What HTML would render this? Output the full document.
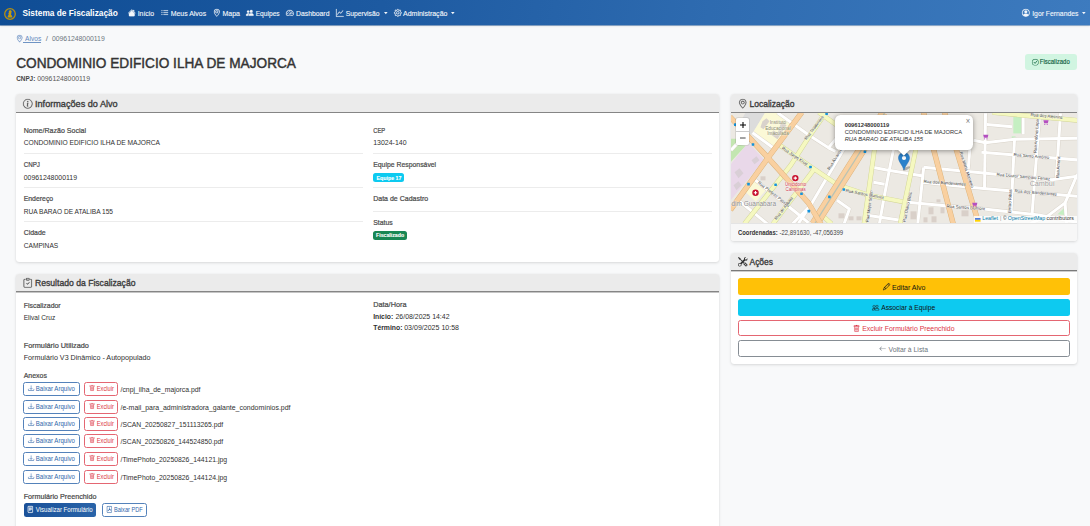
<!DOCTYPE html>
<html><head><meta charset="utf-8"><title>Sistema de Fiscalização</title>
<style>
html,body{margin:0;padding:0}
body{width:1090px;height:526px;overflow:hidden;position:relative;background:#f8f9fa;font-family:"Liberation Sans",sans-serif}
.t{position:absolute;white-space:nowrap;transform-origin:0 0;display:block}
.i{position:absolute;display:block;overflow:visible}
.b{position:absolute;box-sizing:border-box}
.card{position:absolute;box-sizing:border-box;background:#fff;border-radius:3px;box-shadow:0 1px 3px rgba(0,0,0,.13),0 0 1px rgba(0,0,0,.08)}
.ch{position:absolute;box-sizing:border-box;background:#ebebeb;border-radius:3px 3px 0 0;border-bottom:1px solid #858585}
.sep{position:absolute;height:1px;background:#ececec}
</style></head><body>
<div class="b" style="left:0.00px;top:0.00px;width:1090.00px;height:26.00px;background:linear-gradient(100deg,#0f4d95 0%,#1d5aa1 35%,#2e6bb0 65%,#3d7bbf 100%);opacity:.5"></div>
<div class="b" style="left:0.00px;top:0.00px;width:1090.00px;height:25.00px;background:linear-gradient(100deg,#0f4d95 0%,#1d5aa1 35%,#2e6bb0 65%,#3d7bbf 100%);box-shadow:0 1px 2px rgba(0,0,0,.12)"></div>
<svg class="i" style="left:4.15px;top:7.7px;width:12px;height:12px" viewBox="0 0 24 24"><circle cx="12" cy="12" r="10.6" fill="#0f50ab" stroke="#b5900f" stroke-width="2.6"/><path d="M12.600 4.600c1.700 0 2.800 1.300 2.800 2.900 0 .900-.300 1.600-.900 2.200.300 1.300.100 2.500-.500 3.600 1.300.800 2.300 2.200 2.600 4.300.100.800-.200 1.300-.900 1.600H8.200c-.700-.300-1-.800-.900-1.600.300-1.900 1.100-3.200 2.300-4-.600-.700-1-1.500-.900-2.400.100-.900.600-1.400 1.200-1.800-.300-.600-.400-1.200-.300-1.900.200-1.700 1.400-2.900 3-2.900z" fill="#c49c0c"/></svg>
<span class="t" style="left:22px;top:3.00px;font-size:9.4px;line-height:20px;color:#fff;transform:translateX(0.50px) scaleX(0.8873);font-weight:bold;">Sistema de Fiscalização</span>
<svg class="i" style="left:128.36px;top:9.32px;width:7.63px;height:7.63px" viewBox="0 0 16 16" fill="#f4f7fb" stroke="#f4f7fb" stroke-width="0.5"><path d="M8.707 1.5a1 1 0 0 0-1.414 0L.646 8.146a.5.5 0 0 0 .708.708L8 2.207l6.646 6.647a.5.5 0 0 0 .708-.708L13 5.793V2.5a.5.5 0 0 0-.5-.5h-1a.5.5 0 0 0-.5.5v1.293z"/><path d="m8 3.293 6 6V13.5a1.5 1.5 0 0 1-1.5 1.5h-9A1.5 1.5 0 0 1 2 13.5V9.293z"/></svg>
<span class="t" style="left:137px;top:4.00px;font-size:7.7px;line-height:20px;color:#f4f7fb;transform:translateX(0.70px) scaleX(0.8966);-webkit-text-stroke:0.12px #f4f7fb;">Início</span>
<svg class="i" style="left:161.12px;top:9.32px;width:7.63px;height:7.63px" viewBox="0 0 16 16" fill="#f4f7fb" stroke="#f4f7fb" stroke-width="0.5"><path fill-rule="evenodd" d="M5 11.5a.5.5 0 0 1 .5-.5h9a.5.5 0 0 1 0 1h-9a.5.5 0 0 1-.5-.5m0-4a.5.5 0 0 1 .5-.5h9a.5.5 0 0 1 0 1h-9a.5.5 0 0 1-.5-.5m0-4a.5.5 0 0 1 .5-.5h9a.5.5 0 0 1 0 1h-9a.5.5 0 0 1-.5-.5m-3 1a1 1 0 1 0 0-2 1 1 0 0 0 0 2m0 4a1 1 0 1 0 0-2 1 1 0 0 0 0 2m0 4a1 1 0 1 0 0-2 1 1 0 0 0 0 2"/></svg>
<span class="t" style="left:170px;top:4.00px;font-size:7.7px;line-height:20px;color:#f4f7fb;transform:translateX(0.70px) scaleX(0.9017);-webkit-text-stroke:0.12px #f4f7fb;">Meus Alvos</span>
<svg class="i" style="left:212.65px;top:9.32px;width:7.63px;height:7.63px" viewBox="0 0 16 16" fill="#f4f7fb" stroke="#f4f7fb" stroke-width="0.5"><path d="M12.166 8.94c-.524 1.062-1.234 2.12-1.96 3.07A32 32 0 0 1 8 14.58a32 32 0 0 1-2.206-2.57c-.726-.95-1.436-2.008-1.96-3.07C3.304 7.867 3 6.862 3 6a5 5 0 0 1 10 0c0 .862-.305 1.867-.834 2.94M8 16s6-5.686 6-10A6 6 0 0 0 2 6c0 4.314 6 10 6 10"/><path d="M8 8a2 2 0 1 1 0-4 2 2 0 0 1 0 4m0 1a3 3 0 1 0 0-6 3 3 0 0 0 0 6"/></svg>
<span class="t" style="left:222px;top:4.00px;font-size:7.7px;line-height:20px;color:#f4f7fb;transform:translateX(0.50px) scaleX(0.9084);-webkit-text-stroke:0.12px #f4f7fb;">Mapa</span>
<svg class="i" style="left:246.10px;top:9.32px;width:7.63px;height:7.63px" viewBox="0 0 16 16" fill="#f4f7fb" stroke="#f4f7fb" stroke-width="0.5"><path d="M7 14s-1 0-1-1 1-4 5-4 5 3 5 4-1 1-1 1zm4-6a3 3 0 1 0 0-6 3 3 0 0 0 0 6m-5.784 6A2.24 2.24 0 0 1 5 13c0-1.355.68-2.75 1.936-3.72A6.3 6.3 0 0 0 5 9c-4 0-5 3-5 4s1 1 1 1zM4.5 8a2.5 2.5 0 1 0 0-5 2.5 2.5 0 0 0 0 5"/></svg>
<span class="t" style="left:255px;top:4.00px;font-size:7.7px;line-height:20px;color:#f4f7fb;transform:translateX(0.70px) scaleX(0.8624);-webkit-text-stroke:0.12px #f4f7fb;">Equipes</span>
<svg class="i" style="left:286.10px;top:9.32px;width:7.63px;height:7.63px" viewBox="0 0 16 16" fill="#f4f7fb" stroke="#f4f7fb" stroke-width="0.5"><path d="M8 4a.5.5 0 0 1 .5.5V6a.5.5 0 0 1-1 0V4.5A.5.5 0 0 1 8 4M3.732 5.732a.5.5 0 0 1 .707 0l.915.914a.5.5 0 1 1-.708.708l-.914-.915a.5.5 0 0 1 0-.707M2 10a.5.5 0 0 1 .5-.5h1.586a.5.5 0 0 1 0 1H2.5A.5.5 0 0 1 2 10m9.5 0a.5.5 0 0 1 .5-.5h1.5a.5.5 0 0 1 0 1H12a.5.5 0 0 1-.5-.5m.754-4.246a.39.39 0 0 0-.527-.02L7.547 9.31a.91.91 0 1 0 1.302 1.258l3.434-4.297a.39.39 0 0 0-.029-.518z"/><path fill-rule="evenodd" d="M0 10a8 8 0 1 1 15.547 2.661c-.442 1.253-1.845 1.602-2.932 1.25C11.309 13.488 9.475 13 8 13c-1.474 0-3.31.488-4.615.911-1.087.352-2.49.003-2.932-1.25A8 8 0 0 1 0 10m8-7a7 7 0 0 0-6.603 9.329c.203.575.923.876 1.68.63C4.397 12.533 6.358 12 8 12s3.604.532 4.923.96c.757.245 1.477-.056 1.68-.631A7 7 0 0 0 8 3"/></svg>
<span class="t" style="left:296px;top:4.00px;font-size:7.7px;line-height:20px;color:#f4f7fb;transform:translateX(0.00px) scaleX(0.8893);-webkit-text-stroke:0.12px #f4f7fb;">Dashboard</span>
<svg class="i" style="left:336.10px;top:9.32px;width:7.63px;height:7.63px" viewBox="0 0 16 16" fill="#f4f7fb" stroke="#f4f7fb" stroke-width="0.5"><path fill-rule="evenodd" d="M0 0h1v15h15v1H0zm14.817 3.113a.5.5 0 0 1 .07.704l-4.5 5.5a.5.5 0 0 1-.74.037L7.06 6.767l-3.656 5.027a.5.5 0 0 1-.808-.588l4-5.5a.5.5 0 0 1 .758-.06l2.609 2.61 4.15-5.073a.5.5 0 0 1 .704-.07"/></svg>
<span class="t" style="left:345px;top:4.00px;font-size:7.7px;line-height:20px;color:#f4f7fb;transform:translateX(0.70px) scaleX(0.8774);-webkit-text-stroke:0.12px #f4f7fb;">Supervisão</span>
<svg class="i" style="left:393.60px;top:9.32px;width:7.63px;height:7.63px" viewBox="0 0 16 16" fill="#f4f7fb" stroke="#f4f7fb" stroke-width="0.5"><path d="M8 4.754a3.246 3.246 0 1 0 0 6.492 3.246 3.246 0 0 0 0-6.492M5.754 8a2.246 2.246 0 1 1 4.492 0 2.246 2.246 0 0 1-4.492 0"/><path d="M9.796 1.343c-.527-1.79-3.065-1.79-3.592 0l-.094.319a.873.873 0 0 1-1.255.52l-.292-.16c-1.64-.892-3.433.902-2.54 2.541l.159.292a.873.873 0 0 1-.52 1.255l-.319.094c-1.79.527-1.79 3.065 0 3.592l.319.094a.873.873 0 0 1 .52 1.255l-.16.292c-.892 1.64.901 3.434 2.541 2.54l.292-.159a.873.873 0 0 1 1.255.52l.094.319c.527 1.79 3.065 1.79 3.592 0l.094-.319a.873.873 0 0 1 1.255-.52l.292.16c1.64.893 3.434-.902 2.54-2.541l-.159-.292a.873.873 0 0 1 .52-1.255l.319-.094c1.79-.527 1.79-3.065 0-3.592l-.319-.094a.873.873 0 0 1-.52-1.255l.16-.292c.893-1.64-.902-3.433-2.541-2.54l-.292.159a.873.873 0 0 1-1.255-.52zm-2.633.283c.246-.835 1.428-.835 1.674 0l.094.319a1.873 1.873 0 0 0 2.693 1.115l.291-.16c.764-.415 1.6.42 1.184 1.185l-.159.292a1.873 1.873 0 0 0 1.116 2.692l.318.094c.835.246.835 1.428 0 1.674l-.319.094a1.873 1.873 0 0 0-1.115 2.693l.16.291c.415.764-.42 1.6-1.185 1.184l-.291-.159a1.873 1.873 0 0 0-2.693 1.116l-.094.318c-.246.835-1.428.835-1.674 0l-.094-.319a1.873 1.873 0 0 0-2.692-1.115l-.292.16c-.764.415-1.6-.42-1.184-1.185l.159-.291A1.873 1.873 0 0 0 1.945 8.93l-.319-.094c-.835-.246-.835-1.428 0-1.674l.319-.094A1.873 1.873 0 0 0 3.06 4.377l-.16-.292c-.415-.764.42-1.6 1.185-1.184l.292.159a1.873 1.873 0 0 0 2.692-1.115z"/></svg>
<span class="t" style="left:403px;top:4.00px;font-size:7.7px;line-height:20px;color:#f4f7fb;transform:translateX(0.00px) scaleX(0.9121);-webkit-text-stroke:0.12px #f4f7fb;">Administração</span>
<svg class="i" style="left:1022.10px;top:9.32px;width:7.63px;height:7.63px" viewBox="0 0 16 16" fill="#f4f7fb" stroke="#f4f7fb" stroke-width="0.5"><path d="M11 6a3 3 0 1 1-6 0 3 3 0 0 1 6 0"/><path fill-rule="evenodd" d="M0 8a8 8 0 1 1 16 0A8 8 0 0 1 0 8m8-7a7 7 0 0 0-5.468 11.37C3.242 11.226 4.805 10 8 10s4.757 1.225 5.468 2.37A7 7 0 0 0 8 1"/></svg>
<span class="t" style="left:1032px;top:4.00px;font-size:7.7px;line-height:20px;color:#f4f7fb;transform:translateX(0.20px) scaleX(0.8866);-webkit-text-stroke:0.12px #f4f7fb;">Igor Fernandes</span>
<svg class="i" style="left:383.70px;top:12.4px;width:3.6px;height:2.2px" viewBox="0 0 10 6"><path d="M0 0h10L5 6z" fill="#f4f7fb"/></svg>
<svg class="i" style="left:451.20px;top:12.4px;width:3.6px;height:2.2px" viewBox="0 0 10 6"><path d="M0 0h10L5 6z" fill="#f4f7fb"/></svg>
<svg class="i" style="left:1082.20px;top:12.4px;width:3.6px;height:2.2px" viewBox="0 0 10 6"><path d="M0 0h10L5 6z" fill="#f4f7fb"/></svg>
<svg class="i" style="left:15.79px;top:35.16px;width:7.25px;height:7.25px" viewBox="0 0 16 16" fill="#6f94c4" stroke="#6f94c4" stroke-width="0.4"><path d="M12.166 8.94c-.524 1.062-1.234 2.12-1.96 3.07A32 32 0 0 1 8 14.58a32 32 0 0 1-2.206-2.57c-.726-.95-1.436-2.008-1.96-3.07C3.304 7.867 3 6.862 3 6a5 5 0 0 1 10 0c0 .862-.305 1.867-.834 2.94M8 16s6-5.686 6-10A6 6 0 0 0 2 6c0 4.314 6 10 6 10"/><path d="M8 8a2 2 0 1 1 0-4 2 2 0 0 1 0 4m0 1a3 3 0 1 0 0-6 3 3 0 0 0 0 6"/></svg>
<span class="t" style="left:25px;top:29.00px;font-size:7.5px;line-height:20px;color:#5f87bd;transform:translateX(0.00px) scaleX(0.8834);">Alvos</span>
<div class="b" style="left:23.20px;top:42.00px;width:18.30px;height:0.70px;background:#6f94c4"></div>
<span class="t" style="left:45px;top:29.00px;font-size:7.5px;line-height:20px;color:#6c757d;transform:translateX(0.80px) scaleX(1.0552);">/</span>
<span class="t" style="left:51px;top:29.00px;font-size:7.5px;line-height:20px;color:#6c757d;transform:translateX(0.90px) scaleX(0.9129);">00961248000119</span>
<span class="t" style="left:16px;top:53.00px;font-size:14.8px;line-height:20px;color:#343434;transform:translateX(0.20px) scaleX(0.9221);-webkit-text-stroke:0.45px #343434;">CONDOMINIO EDIFICIO ILHA DE MAJORCA</span>
<span class="t" style="left:16px;top:69.00px;font-size:7.4px;line-height:20px;color:#444;transform:translateX(0.20px) scaleX(0.8601);font-weight:bold;">CNPJ:</span>
<span class="t" style="left:37px;top:69.00px;font-size:7.4px;line-height:20px;color:#555;transform:translateX(0.20px) scaleX(0.9252);">00961248000119</span>
<div class="b" style="left:1025.20px;top:54.00px;width:52.00px;height:16.20px;background:#d1f5e1;border-radius:3px"></div>
<svg class="i" style="left:1031.70px;top:58.63px;width:6.60px;height:6.60px" viewBox="0 0 16 16" fill="#146c43" stroke="#146c43" stroke-width="0.2"><path d="M8 15A7 7 0 1 1 8 1a7 7 0 0 1 0 14m0 1A8 8 0 1 0 8 0a8 8 0 0 0 0 16"/><path d="m10.97 4.97-.02.022-3.473 4.425-2.093-2.094a.75.75 0 0 0-1.06 1.06L6.97 11.03a.75.75 0 0 0 1.079-.02l3.992-4.99a.75.75 0 0 0-1.071-1.05"/></svg>
<span class="t" style="left:1039px;top:52.00px;font-size:7.2px;line-height:20px;color:#0c5c3c;transform:translateX(0.80px) scaleX(0.8330);-webkit-text-stroke:0.15px #0c5c3c;">Fiscalizado</span>
<div class="card" style="left:16px;top:94px;width:703px;height:168px"></div>
<div class="ch" style="left:16px;top:94px;width:703px;height:18.8px"></div>
<svg class="i" style="left:23.20px;top:98.65px;width:9.54px;height:9.54px" viewBox="0 0 16 16" fill="#4a4a4a" stroke="#4a4a4a" stroke-width="0.3"><path d="M8 15A7 7 0 1 1 8 1a7 7 0 0 1 0 14m0 1A8 8 0 1 0 8 0a8 8 0 0 0 0 16"/><path d="m8.93 6.588-2.29.287-.082.38.45.083c.294.07.352.176.288.469l-.738 3.468c-.194.897.105 1.319.808 1.319.545 0 1.178-.252 1.465-.598l.088-.416c-.2.176-.492.246-.686.246-.275 0-.375-.193-.304-.533zM9 4.5a1 1 0 1 1-2 0 1 1 0 0 1 2 0"/></svg>
<span class="t" style="left:35px;top:94.00px;font-size:9.5px;line-height:20px;color:#3a3a3a;transform:translateX(0.00px) scaleX(0.9607);-webkit-text-stroke:0.35px #3a3a3a;">Informações do Alvo</span>
<span class="t" style="left:23px;top:121.00px;font-size:7.6px;line-height:20px;color:#4a4a4a;transform:translateX(0.70px) scaleX(0.9276);-webkit-text-stroke:0.22px #4a4a4a;">Nome/Razão Social</span>
<span class="t" style="left:23px;top:133.00px;font-size:7.5px;line-height:20px;color:#2f2f2f;transform:translateX(0.70px) scaleX(0.8864);">CONDOMINIO EDIFICIO ILHA DE MAJORCA</span>
<span class="t" style="left:23px;top:155.00px;font-size:7.6px;line-height:20px;color:#4a4a4a;transform:translateX(0.70px) scaleX(0.8214);-webkit-text-stroke:0.22px #4a4a4a;">CNPJ</span>
<span class="t" style="left:23px;top:168.00px;font-size:7.5px;line-height:20px;color:#2f2f2f;transform:translateX(0.70px) scaleX(0.9215);">00961248000119</span>
<span class="t" style="left:23px;top:189.00px;font-size:7.6px;line-height:20px;color:#4a4a4a;transform:translateX(0.70px) scaleX(0.9067);-webkit-text-stroke:0.22px #4a4a4a;">Endereço</span>
<span class="t" style="left:23px;top:202.00px;font-size:7.5px;line-height:20px;color:#2f2f2f;transform:translateX(0.70px) scaleX(0.8768);">RUA BARAO DE ATALIBA 155</span>
<span class="t" style="left:23px;top:223.00px;font-size:7.6px;line-height:20px;color:#4a4a4a;transform:translateX(0.70px) scaleX(0.9135);-webkit-text-stroke:0.22px #4a4a4a;">Cidade</span>
<span class="t" style="left:23px;top:236.00px;font-size:7.5px;line-height:20px;color:#2f2f2f;transform:translateX(0.70px) scaleX(0.8807);">CAMPINAS</span>
<div class="sep" style="left:23.7px;top:153px;width:339.3px"></div>
<div class="sep" style="left:23.7px;top:187px;width:339.3px"></div>
<div class="sep" style="left:23.7px;top:221.2px;width:339.3px"></div>
<span class="t" style="left:373px;top:121.00px;font-size:7.6px;line-height:20px;color:#4a4a4a;transform:translateX(0.20px) scaleX(0.7680);-webkit-text-stroke:0.22px #4a4a4a;">CEP</span>
<span class="t" style="left:373px;top:133.00px;font-size:7.5px;line-height:20px;color:#2f2f2f;transform:translateX(0.20px) scaleX(0.9285);">13024-140</span>
<span class="t" style="left:373px;top:155.00px;font-size:7.6px;line-height:20px;color:#4a4a4a;transform:translateX(0.20px) scaleX(0.9037);-webkit-text-stroke:0.22px #4a4a4a;">Equipe Responsável</span>
<div class="b" style="left:373.20px;top:173.00px;width:31.30px;height:9.00px;background:#0dcaf0;border-radius:2.5px"></div>
<span class="t" style="left:376px;top:168.00px;font-size:5.7px;line-height:20px;color:#fff;transform:translateX(0.50px) scaleX(0.9284);font-weight:bold;-webkit-text-stroke:0.12px #fff;">Equipe 17</span>
<span class="t" style="left:373px;top:189.00px;font-size:7.6px;line-height:20px;color:#4a4a4a;transform:translateX(0.20px) scaleX(0.9233);-webkit-text-stroke:0.22px #4a4a4a;">Data de Cadastro</span>
<span class="t" style="left:373px;top:213.00px;font-size:7.6px;line-height:20px;color:#4a4a4a;transform:translateX(0.20px) scaleX(0.9050);-webkit-text-stroke:0.22px #4a4a4a;">Status</span>
<div class="b" style="left:373.20px;top:231.00px;width:33.80px;height:8.50px;background:#198754;border-radius:2.5px"></div>
<span class="t" style="left:376px;top:225.00px;font-size:5.7px;line-height:20px;color:#fff;transform:translateX(0.00px) scaleX(0.9177);font-weight:bold;-webkit-text-stroke:0.12px #fff;">Fiscalizado</span>
<div class="sep" style="left:373.2px;top:153px;width:338.5px"></div>
<div class="sep" style="left:373.2px;top:187px;width:338.5px"></div>
<div class="sep" style="left:373.2px;top:211px;width:338.5px"></div>
<div class="card" style="left:16px;top:273.8px;width:703px;height:270px"></div>
<div class="ch" style="left:16px;top:273.8px;width:703px;height:18.2px;border-bottom:1px solid #858585;box-shadow:0 1px 0 rgba(90,90,90,.35)"></div>
<svg class="i" style="left:23.20px;top:278.45px;width:9.54px;height:9.54px" viewBox="0 0 16 16" fill="#4a4a4a" stroke="#4a4a4a" stroke-width="0.3"><path fill-rule="evenodd" d="M10.854 7.146a.5.5 0 0 1 0 .708l-3 3a.5.5 0 0 1-.708 0l-1.5-1.5a.5.5 0 1 1 .708-.708L7.5 9.793l2.646-2.647a.5.5 0 0 1 .708 0"/><path d="M4 1.5H3a2 2 0 0 0-2 2V14a2 2 0 0 0 2 2h10a2 2 0 0 0 2-2V3.5a2 2 0 0 0-2-2h-1v1h1a1 1 0 0 1 1 1V14a1 1 0 0 1-1 1H3a1 1 0 0 1-1-1V3.5a1 1 0 0 1 1-1h1z"/><path d="M9.5 1a.5.5 0 0 1 .5.5v1a.5.5 0 0 1-.5.5h-3a.5.5 0 0 1-.5-.5v-1a.5.5 0 0 1 .5-.5zm-3-1A1.5 1.5 0 0 0 5 1.5v1A1.5 1.5 0 0 0 6.500 4h3A1.5 1.5 0 0 0 11 2.500v-1A1.5 1.5 0 0 0 9.500 0z"/></svg>
<span class="t" style="left:35px;top:273.00px;font-size:9.5px;line-height:20px;color:#3a3a3a;transform:translateX(0.00px) scaleX(0.9063);-webkit-text-stroke:0.35px #3a3a3a;">Resultado da Fiscalização</span>
<span class="t" style="left:23px;top:296.00px;font-size:7.6px;line-height:20px;color:#4a4a4a;transform:translateX(0.70px) scaleX(0.9125);-webkit-text-stroke:0.22px #4a4a4a;">Fiscalizador</span>
<span class="t" style="left:23px;top:308.00px;font-size:7.5px;line-height:20px;color:#2f2f2f;transform:translateX(0.70px) scaleX(0.8788);">Elival Cruz</span>
<span class="t" style="left:373px;top:295.00px;font-size:7.6px;line-height:20px;color:#4a4a4a;transform:translateX(0.20px) scaleX(0.9613);-webkit-text-stroke:0.22px #4a4a4a;">Data/Hora</span>
<span class="t" style="left:373px;top:307.00px;font-size:7.5px;line-height:20px;color:#2f2f2f;transform:translateX(0.20px) scaleX(0.9058);font-weight:bold;">Início:</span>
<span class="t" style="left:395px;top:307.00px;font-size:7.5px;line-height:20px;color:#2f2f2f;transform:translateX(0.50px) scaleX(0.9249);">26/08/2025 14:42</span>
<span class="t" style="left:373px;top:318.00px;font-size:7.5px;line-height:20px;color:#2f2f2f;transform:translateX(0.20px) scaleX(0.9132);font-weight:bold;">Término:</span>
<span class="t" style="left:404px;top:318.00px;font-size:7.5px;line-height:20px;color:#2f2f2f;transform:translateX(0.20px) scaleX(0.9386);">03/09/2025 10:58</span>
<span class="t" style="left:23px;top:336.00px;font-size:7.6px;line-height:20px;color:#4a4a4a;transform:translateX(0.70px) scaleX(0.9663);-webkit-text-stroke:0.22px #4a4a4a;">Formulário Utilizado</span>
<span class="t" style="left:23px;top:348.00px;font-size:7.5px;line-height:20px;color:#2f2f2f;transform:translateX(0.70px) scaleX(0.9535);">Formulário V3 Dinâmico - Autopopulado</span>
<span class="t" style="left:23px;top:366.00px;font-size:7.6px;line-height:20px;color:#4a4a4a;transform:translateX(0.70px) scaleX(0.9193);-webkit-text-stroke:0.22px #4a4a4a;">Anexos</span>
<div class="b" style="left:23.30px;top:382.00px;width:56.40px;height:14.00px;border:1px solid #5482ba;border-radius:2.5px;background:#fff"></div>
<svg class="i" style="left:27.80px;top:384.92px;width:6.15px;height:6.15px" viewBox="0 0 16 16" fill="#2f66aa" stroke="#2f66aa" stroke-width="0.2"><path d="M.5 9.900a.5.5 0 0 1 .5.5v2.500a1 1 0 0 0 1 1h12a1 1 0 0 0 1-1v-2.500a.5.5 0 0 1 1 0v2.500a2 2 0 0 1-2 2H2a2 2 0 0 1-2-2v-2.500a.5.5 0 0 1 .5-.5"/><path d="M7.646 11.854a.5.5 0 0 0 .708 0l3-3a.5.5 0 0 0-.708-.708L8.500 10.293V1.500a.5.5 0 0 0-1 0v8.793L5.354 8.146a.5.5 0 1 0-.708.708z"/></svg>
<span class="t" style="left:35px;top:379.00px;font-size:6.6px;line-height:20px;color:#2f66aa;transform:translateX(0.70px) scaleX(0.9235);">Baixar Arquivo</span>
<div class="b" style="left:84.30px;top:382.00px;width:33.70px;height:14.00px;border:1px solid #e46672;border-radius:2.5px;background:#fff"></div>
<svg class="i" style="left:88.92px;top:384.92px;width:6.15px;height:6.15px" viewBox="0 0 16 16" fill="#dc3545" stroke="#dc3545" stroke-width="0.2"><path d="M5.5 5.5A.5.5 0 0 1 6 6v6a.5.5 0 0 1-1 0V6a.5.5 0 0 1 .5-.5m2.500 0a.5.5 0 0 1 .5.5v6a.5.5 0 0 1-1 0V6a.5.5 0 0 1 .5-.5m3 .5a.5.5 0 0 0-1 0v6a.5.5 0 0 0 1 0z"/><path d="M14.500 3a1 1 0 0 1-1 1H13v9a2 2 0 0 1-2 2H5a2 2 0 0 1-2-2V4h-.5a1 1 0 0 1-1-1V2a1 1 0 0 1 1-1H6a1 1 0 0 1 1-1h2a1 1 0 0 1 1 1h3.500a1 1 0 0 1 1 1zM4.118 4 4 4.059V13a1 1 0 0 0 1 1h6a1 1 0 0 0 1-1V4.059L11.882 4zM2.500 3h11V2h-11z"/></svg>
<span class="t" style="left:96px;top:379.00px;font-size:6.6px;line-height:20px;color:#dc3545;transform:translateX(0.70px) scaleX(0.8734);">Excluir</span>
<span class="t" style="left:120px;top:380.00px;font-size:7.5px;line-height:20px;color:#2f2f2f;transform:translateX(0.50px) scaleX(0.9135);">/cnpj_ilha_de_majorca.pdf</span>
<div class="b" style="left:23.30px;top:400.00px;width:56.40px;height:14.00px;border:1px solid #5482ba;border-radius:2.5px;background:#fff"></div>
<svg class="i" style="left:27.80px;top:402.92px;width:6.15px;height:6.15px" viewBox="0 0 16 16" fill="#2f66aa" stroke="#2f66aa" stroke-width="0.2"><path d="M.5 9.900a.5.5 0 0 1 .5.5v2.500a1 1 0 0 0 1 1h12a1 1 0 0 0 1-1v-2.500a.5.5 0 0 1 1 0v2.500a2 2 0 0 1-2 2H2a2 2 0 0 1-2-2v-2.500a.5.5 0 0 1 .5-.5"/><path d="M7.646 11.854a.5.5 0 0 0 .708 0l3-3a.5.5 0 0 0-.708-.708L8.500 10.293V1.500a.5.5 0 0 0-1 0v8.793L5.354 8.146a.5.5 0 1 0-.708.708z"/></svg>
<span class="t" style="left:35px;top:397.00px;font-size:6.6px;line-height:20px;color:#2f66aa;transform:translateX(0.70px) scaleX(0.9235);">Baixar Arquivo</span>
<div class="b" style="left:84.30px;top:400.00px;width:33.70px;height:14.00px;border:1px solid #e46672;border-radius:2.5px;background:#fff"></div>
<svg class="i" style="left:88.92px;top:402.92px;width:6.15px;height:6.15px" viewBox="0 0 16 16" fill="#dc3545" stroke="#dc3545" stroke-width="0.2"><path d="M5.5 5.5A.5.5 0 0 1 6 6v6a.5.5 0 0 1-1 0V6a.5.5 0 0 1 .5-.5m2.500 0a.5.5 0 0 1 .5.5v6a.5.5 0 0 1-1 0V6a.5.5 0 0 1 .5-.5m3 .5a.5.5 0 0 0-1 0v6a.5.5 0 0 0 1 0z"/><path d="M14.500 3a1 1 0 0 1-1 1H13v9a2 2 0 0 1-2 2H5a2 2 0 0 1-2-2V4h-.5a1 1 0 0 1-1-1V2a1 1 0 0 1 1-1H6a1 1 0 0 1 1-1h2a1 1 0 0 1 1 1h3.500a1 1 0 0 1 1 1zM4.118 4 4 4.059V13a1 1 0 0 0 1 1h6a1 1 0 0 0 1-1V4.059L11.882 4zM2.500 3h11V2h-11z"/></svg>
<span class="t" style="left:96px;top:397.00px;font-size:6.6px;line-height:20px;color:#dc3545;transform:translateX(0.70px) scaleX(0.8734);">Excluir</span>
<span class="t" style="left:120px;top:398.00px;font-size:7.5px;line-height:20px;color:#2f2f2f;transform:translateX(0.50px) scaleX(0.9266);">/e-mail_para_administradora_galante_condomínios.pdf</span>
<div class="b" style="left:23.30px;top:417.00px;width:56.40px;height:14.00px;border:1px solid #5482ba;border-radius:2.5px;background:#fff"></div>
<svg class="i" style="left:27.80px;top:419.92px;width:6.15px;height:6.15px" viewBox="0 0 16 16" fill="#2f66aa" stroke="#2f66aa" stroke-width="0.2"><path d="M.5 9.900a.5.5 0 0 1 .5.5v2.500a1 1 0 0 0 1 1h12a1 1 0 0 0 1-1v-2.500a.5.5 0 0 1 1 0v2.500a2 2 0 0 1-2 2H2a2 2 0 0 1-2-2v-2.500a.5.5 0 0 1 .5-.5"/><path d="M7.646 11.854a.5.5 0 0 0 .708 0l3-3a.5.5 0 0 0-.708-.708L8.500 10.293V1.500a.5.5 0 0 0-1 0v8.793L5.354 8.146a.5.5 0 1 0-.708.708z"/></svg>
<span class="t" style="left:35px;top:414.00px;font-size:6.6px;line-height:20px;color:#2f66aa;transform:translateX(0.70px) scaleX(0.9235);">Baixar Arquivo</span>
<div class="b" style="left:84.30px;top:417.00px;width:33.70px;height:14.00px;border:1px solid #e46672;border-radius:2.5px;background:#fff"></div>
<svg class="i" style="left:88.92px;top:419.92px;width:6.15px;height:6.15px" viewBox="0 0 16 16" fill="#dc3545" stroke="#dc3545" stroke-width="0.2"><path d="M5.5 5.5A.5.5 0 0 1 6 6v6a.5.5 0 0 1-1 0V6a.5.5 0 0 1 .5-.5m2.500 0a.5.5 0 0 1 .5.5v6a.5.5 0 0 1-1 0V6a.5.5 0 0 1 .5-.5m3 .5a.5.5 0 0 0-1 0v6a.5.5 0 0 0 1 0z"/><path d="M14.500 3a1 1 0 0 1-1 1H13v9a2 2 0 0 1-2 2H5a2 2 0 0 1-2-2V4h-.5a1 1 0 0 1-1-1V2a1 1 0 0 1 1-1H6a1 1 0 0 1 1-1h2a1 1 0 0 1 1 1h3.500a1 1 0 0 1 1 1zM4.118 4 4 4.059V13a1 1 0 0 0 1 1h6a1 1 0 0 0 1-1V4.059L11.882 4zM2.500 3h11V2h-11z"/></svg>
<span class="t" style="left:96px;top:414.00px;font-size:6.6px;line-height:20px;color:#dc3545;transform:translateX(0.70px) scaleX(0.8734);">Excluir</span>
<span class="t" style="left:120px;top:415.00px;font-size:7.5px;line-height:20px;color:#2f2f2f;transform:translateX(0.50px) scaleX(0.9041);">/SCAN_20250827_151113265.pdf</span>
<div class="b" style="left:23.30px;top:434.00px;width:56.40px;height:14.00px;border:1px solid #5482ba;border-radius:2.5px;background:#fff"></div>
<svg class="i" style="left:27.80px;top:436.92px;width:6.15px;height:6.15px" viewBox="0 0 16 16" fill="#2f66aa" stroke="#2f66aa" stroke-width="0.2"><path d="M.5 9.900a.5.5 0 0 1 .5.5v2.500a1 1 0 0 0 1 1h12a1 1 0 0 0 1-1v-2.500a.5.5 0 0 1 1 0v2.500a2 2 0 0 1-2 2H2a2 2 0 0 1-2-2v-2.500a.5.5 0 0 1 .5-.5"/><path d="M7.646 11.854a.5.5 0 0 0 .708 0l3-3a.5.5 0 0 0-.708-.708L8.500 10.293V1.500a.5.5 0 0 0-1 0v8.793L5.354 8.146a.5.5 0 1 0-.708.708z"/></svg>
<span class="t" style="left:35px;top:431.00px;font-size:6.6px;line-height:20px;color:#2f66aa;transform:translateX(0.70px) scaleX(0.9235);">Baixar Arquivo</span>
<div class="b" style="left:84.30px;top:434.00px;width:33.70px;height:14.00px;border:1px solid #e46672;border-radius:2.5px;background:#fff"></div>
<svg class="i" style="left:88.92px;top:436.92px;width:6.15px;height:6.15px" viewBox="0 0 16 16" fill="#dc3545" stroke="#dc3545" stroke-width="0.2"><path d="M5.5 5.5A.5.5 0 0 1 6 6v6a.5.5 0 0 1-1 0V6a.5.5 0 0 1 .5-.5m2.500 0a.5.5 0 0 1 .5.5v6a.5.5 0 0 1-1 0V6a.5.5 0 0 1 .5-.5m3 .5a.5.5 0 0 0-1 0v6a.5.5 0 0 0 1 0z"/><path d="M14.500 3a1 1 0 0 1-1 1H13v9a2 2 0 0 1-2 2H5a2 2 0 0 1-2-2V4h-.5a1 1 0 0 1-1-1V2a1 1 0 0 1 1-1H6a1 1 0 0 1 1-1h2a1 1 0 0 1 1 1h3.500a1 1 0 0 1 1 1zM4.118 4 4 4.059V13a1 1 0 0 0 1 1h6a1 1 0 0 0 1-1V4.059L11.882 4zM2.500 3h11V2h-11z"/></svg>
<span class="t" style="left:96px;top:431.00px;font-size:6.6px;line-height:20px;color:#dc3545;transform:translateX(0.70px) scaleX(0.8734);">Excluir</span>
<span class="t" style="left:120px;top:432.00px;font-size:7.5px;line-height:20px;color:#2f2f2f;transform:translateX(0.50px) scaleX(0.8954);">/SCAN_20250826_144524850.pdf</span>
<div class="b" style="left:23.30px;top:452.00px;width:56.40px;height:14.00px;border:1px solid #5482ba;border-radius:2.5px;background:#fff"></div>
<svg class="i" style="left:27.80px;top:454.92px;width:6.15px;height:6.15px" viewBox="0 0 16 16" fill="#2f66aa" stroke="#2f66aa" stroke-width="0.2"><path d="M.5 9.900a.5.5 0 0 1 .5.5v2.500a1 1 0 0 0 1 1h12a1 1 0 0 0 1-1v-2.500a.5.5 0 0 1 1 0v2.500a2 2 0 0 1-2 2H2a2 2 0 0 1-2-2v-2.500a.5.5 0 0 1 .5-.5"/><path d="M7.646 11.854a.5.5 0 0 0 .708 0l3-3a.5.5 0 0 0-.708-.708L8.500 10.293V1.500a.5.5 0 0 0-1 0v8.793L5.354 8.146a.5.5 0 1 0-.708.708z"/></svg>
<span class="t" style="left:35px;top:449.00px;font-size:6.6px;line-height:20px;color:#2f66aa;transform:translateX(0.70px) scaleX(0.9235);">Baixar Arquivo</span>
<div class="b" style="left:84.30px;top:452.00px;width:33.70px;height:14.00px;border:1px solid #e46672;border-radius:2.5px;background:#fff"></div>
<svg class="i" style="left:88.92px;top:454.92px;width:6.15px;height:6.15px" viewBox="0 0 16 16" fill="#dc3545" stroke="#dc3545" stroke-width="0.2"><path d="M5.5 5.5A.5.5 0 0 1 6 6v6a.5.5 0 0 1-1 0V6a.5.5 0 0 1 .5-.5m2.500 0a.5.5 0 0 1 .5.5v6a.5.5 0 0 1-1 0V6a.5.5 0 0 1 .5-.5m3 .5a.5.5 0 0 0-1 0v6a.5.5 0 0 0 1 0z"/><path d="M14.500 3a1 1 0 0 1-1 1H13v9a2 2 0 0 1-2 2H5a2 2 0 0 1-2-2V4h-.5a1 1 0 0 1-1-1V2a1 1 0 0 1 1-1H6a1 1 0 0 1 1-1h2a1 1 0 0 1 1 1h3.500a1 1 0 0 1 1 1zM4.118 4 4 4.059V13a1 1 0 0 0 1 1h6a1 1 0 0 0 1-1V4.059L11.882 4zM2.500 3h11V2h-11z"/></svg>
<span class="t" style="left:96px;top:449.00px;font-size:6.6px;line-height:20px;color:#dc3545;transform:translateX(0.70px) scaleX(0.8734);">Excluir</span>
<span class="t" style="left:120px;top:450.00px;font-size:7.5px;line-height:20px;color:#2f2f2f;transform:translateX(0.50px) scaleX(0.9110);">/TimePhoto_20250826_144121.jpg</span>
<div class="b" style="left:23.30px;top:470.00px;width:56.40px;height:14.00px;border:1px solid #5482ba;border-radius:2.5px;background:#fff"></div>
<svg class="i" style="left:27.80px;top:472.92px;width:6.15px;height:6.15px" viewBox="0 0 16 16" fill="#2f66aa" stroke="#2f66aa" stroke-width="0.2"><path d="M.5 9.900a.5.5 0 0 1 .5.5v2.500a1 1 0 0 0 1 1h12a1 1 0 0 0 1-1v-2.500a.5.5 0 0 1 1 0v2.500a2 2 0 0 1-2 2H2a2 2 0 0 1-2-2v-2.500a.5.5 0 0 1 .5-.5"/><path d="M7.646 11.854a.5.5 0 0 0 .708 0l3-3a.5.5 0 0 0-.708-.708L8.500 10.293V1.500a.5.5 0 0 0-1 0v8.793L5.354 8.146a.5.5 0 1 0-.708.708z"/></svg>
<span class="t" style="left:35px;top:467.00px;font-size:6.6px;line-height:20px;color:#2f66aa;transform:translateX(0.70px) scaleX(0.9235);">Baixar Arquivo</span>
<div class="b" style="left:84.30px;top:470.00px;width:33.70px;height:14.00px;border:1px solid #e46672;border-radius:2.5px;background:#fff"></div>
<svg class="i" style="left:88.92px;top:472.92px;width:6.15px;height:6.15px" viewBox="0 0 16 16" fill="#dc3545" stroke="#dc3545" stroke-width="0.2"><path d="M5.5 5.5A.5.5 0 0 1 6 6v6a.5.5 0 0 1-1 0V6a.5.5 0 0 1 .5-.5m2.500 0a.5.5 0 0 1 .5.5v6a.5.5 0 0 1-1 0V6a.5.5 0 0 1 .5-.5m3 .5a.5.5 0 0 0-1 0v6a.5.5 0 0 0 1 0z"/><path d="M14.500 3a1 1 0 0 1-1 1H13v9a2 2 0 0 1-2 2H5a2 2 0 0 1-2-2V4h-.5a1 1 0 0 1-1-1V2a1 1 0 0 1 1-1H6a1 1 0 0 1 1-1h2a1 1 0 0 1 1 1h3.500a1 1 0 0 1 1 1zM4.118 4 4 4.059V13a1 1 0 0 0 1 1h6a1 1 0 0 0 1-1V4.059L11.882 4zM2.500 3h11V2h-11z"/></svg>
<span class="t" style="left:96px;top:467.00px;font-size:6.6px;line-height:20px;color:#dc3545;transform:translateX(0.70px) scaleX(0.8734);">Excluir</span>
<span class="t" style="left:120px;top:468.00px;font-size:7.5px;line-height:20px;color:#2f2f2f;transform:translateX(0.50px) scaleX(0.9110);">/TimePhoto_20250826_144124.jpg</span>
<span class="t" style="left:23px;top:487.00px;font-size:7.6px;line-height:20px;color:#4a4a4a;transform:translateX(0.70px) scaleX(0.9469);-webkit-text-stroke:0.22px #4a4a4a;">Formulário Preenchido</span>
<div class="b" style="left:23.50px;top:503.20px;width:72.70px;height:13.90px;background:linear-gradient(100deg,#1a5199,#2a64a9);border-radius:2.5px"></div>
<svg class="i" style="left:27.36px;top:506.45px;width:6.68px;height:6.68px" viewBox="0 0 16 16" fill="#fff" stroke="#fff" stroke-width="0.6"><path d="M5 4a.5.5 0 0 0 0 1h6a.5.5 0 0 0 0-1zm-.5 2.500A.5.5 0 0 1 5 6h6a.5.5 0 0 1 0 1H5a.5.5 0 0 1-.5-.5M5 8a.5.5 0 0 0 0 1h6a.5.5 0 0 0 0-1zm0 2a.5.5 0 0 0 0 1h3a.5.5 0 0 0 0-1z"/><path d="M2 2a2 2 0 0 1 2-2h8a2 2 0 0 1 2 2v12a2 2 0 0 1-2 2H4a2 2 0 0 1-2-2zm10-1H4a1 1 0 0 0-1 1v12a1 1 0 0 0 1 1h8a1 1 0 0 0 1-1V2a1 1 0 0 0-1-1"/></svg>
<span class="t" style="left:35px;top:500.00px;font-size:6.6px;line-height:20px;color:#fff;transform:translateX(0.70px) scaleX(0.9213);">Visualizar Formulário</span>
<div class="b" style="left:102.20px;top:503.20px;width:44.50px;height:13.90px;border:1px solid #5482ba;border-radius:2.5px;background:#fff"></div>
<svg class="i" style="left:106.37px;top:506.45px;width:6.68px;height:6.68px" viewBox="0 0 16 16" fill="#2f66aa" stroke="#2f66aa" stroke-width="0.2"><path d="M4 0a2 2 0 0 0-2 2v12a2 2 0 0 0 2 2h8a2 2 0 0 0 2-2V2a2 2 0 0 0-2-2zm0 1h8a1 1 0 0 1 1 1v12a1 1 0 0 1-1 1H4a1 1 0 0 1-1-1V2a1 1 0 0 1 1-1"/><path d="M4.603 12.087a.8.8 0 0 1-.438-.42c-.195-.388-.13-.776.08-1.102.198-.307.526-.568.897-.787a7.700 7.700 0 0 1 1.482-.645 20 20 0 0 0 1.062-2.227 7.300 7.300 0 0 1-.43-1.295c-.086-.4-.119-.796-.046-1.136.075-.354.274-.672.65-.823.192-.077.4-.12.602-.077a.7.7 0 0 1 .477.365c.088.164.12.356.127.538.007.187-.012.395-.047.614-.084.510-.270 1.134-.520 1.794a11 11 0 0 0 .980 1.686 5.800 5.800 0 0 1 1.334.050c.364.065.734.195.960.465.120.144.193.320.200.518.007.192-.047.382-.138.563a1.040 1.040 0 0 1-.354.416.86.860 0 0 1-.510.138c-.331-.014-.654-.196-.933-.417a5.700 5.700 0 0 1-.911-.950 11.600 11.600 0 0 0-1.997.406 11.300 11.300 0 0 1-1.021 1.510c-.290.350-.608.655-.926.787a.8.8 0 0 1-.580.029"/></svg>
<span class="t" style="left:114px;top:500.00px;font-size:6.6px;line-height:20px;color:#2f66aa;transform:translateX(0.00px) scaleX(0.8506);">Baixar PDF</span>
<div class="card" style="left:730.5px;top:94px;width:346.5px;height:147px;overflow:hidden"></div>
<div class="ch" style="left:730.5px;top:94px;width:346.5px;height:18.8px"></div>
<svg class="i" style="left:737.81px;top:98.65px;width:9.54px;height:9.54px" viewBox="0 0 16 16" fill="#4a4a4a" stroke="#4a4a4a" stroke-width="0.3"><path d="M12.166 8.94c-.524 1.062-1.234 2.12-1.96 3.07A32 32 0 0 1 8 14.58a32 32 0 0 1-2.206-2.57c-.726-.95-1.436-2.008-1.96-3.07C3.304 7.867 3 6.862 3 6a5 5 0 0 1 10 0c0 .862-.305 1.867-.834 2.94M8 16s6-5.686 6-10A6 6 0 0 0 2 6c0 4.314 6 10 6 10"/><path d="M8 8a2 2 0 1 1 0-4 2 2 0 0 1 0 4m0 1a3 3 0 1 0 0-6 3 3 0 0 0 0 6"/></svg>
<span class="t" style="left:749px;top:94.00px;font-size:9.5px;line-height:20px;color:#3a3a3a;transform:translateX(0.50px) scaleX(0.8970);-webkit-text-stroke:0.35px #3a3a3a;">Localização</span>
<svg class="i" style="left:730.5px;top:112.7px;width:346.5px;height:110.3px;overflow:hidden;font-family:'Liberation Sans',sans-serif" viewBox="730.5 112.7 346.5 110.3"><rect x="730.5" y="112.7" width="346.5" height="110.3" fill="#ece9e3"/><polygon points="730.5,163.7 745.1,145.4 749.7,144.2 763.4,159.1 756.5,168.2 730.5,199.5" fill="#e9d8e9"/><polygon points="730.5,138.5 736,138.5 736,144.2 745.1,145.4 730.5,161.4" fill="#c3e6b1"/><polygon points="745,112.5 764.5,112.5 752.5,132.3 749.7,134.5 738,125" fill="#dcdcdc"/><polygon points="764.5,112.5 776,112.5 790.2,122.6 773.7,147.7 752.5,132.3" fill="#fbf9d6"/><polygon points="762,121 766,118 769,121 763,129 760,127" fill="#d9d2cb"/><polygon points="781,121 786,125 777,139 770,134 773,130 777,133" fill="#d9d2cb"/><polygon points="745.1,191.8 754.8,180.4 765.7,189.5 755.4,201.5" fill="#fbf9d6"/><polygon points="734,172 739,168 743,173 738,178" fill="#d9cfd6"/><polygon points="751,160 756,156 759,160 754,164" fill="#d9cfd6"/><polygon points="733,185 738,181 741,185 736,190" fill="#d9cfd6"/><rect x="1012.8" y="115.5" width="10" height="17.6" fill="#c5efc2"/><rect x="1011.3" y="136" width="3.8" height="3.4" fill="#c5efc2"/><polygon points="1057,214 1065.7,206 1065.7,215" fill="#c5efc2"/><rect x="760" y="176" width="5" height="4" fill="#d9d0c9"/><rect x="838" y="213" width="6" height="5" fill="#d9d0c9"/><rect x="848" y="216" width="5" height="4" fill="#d9d0c9"/><rect x="856" y="216" width="5" height="4" fill="#d9d0c9"/><rect x="920" y="170" width="3" height="3" fill="#d9d0c9"/><rect x="910" y="211" width="6" height="8" fill="#d9d0c9"/><rect x="928" y="207" width="5" height="7" fill="#d9d0c9"/><rect x="923" y="217" width="4" height="5" fill="#d9d0c9"/><rect x="931" y="216" width="5" height="6" fill="#d9d0c9"/><rect x="940" y="207" width="4" height="6" fill="#d9d0c9"/><rect x="961" y="210" width="7" height="6" fill="#d9d0c9"/><rect x="936" y="199" width="4" height="3" fill="#d9d0c9"/><path d="M777.1 112.5 L807.9 134.5 L828.0 147.5 L835.0 151.0" stroke="#d8d2c8" stroke-width="3.8" fill="none" stroke-linecap="butt" stroke-linejoin="round" /><path d="M843.8 148.0 L810.9 203.6 L798.0 223.0" stroke="#d8d2c8" stroke-width="3.8" fill="none" stroke-linecap="butt" stroke-linejoin="round" /><path d="M752.0 132.5 L774.0 148.5" stroke="#d8d2c8" stroke-width="3.8" fill="none" stroke-linecap="butt" stroke-linejoin="round" /><path d="M754.8 179.8 L796.5 213.0 L808.0 222.5" stroke="#d8d2c8" stroke-width="3.8" fill="none" stroke-linecap="butt" stroke-linejoin="round" /><path d="M792.0 223.5 L808.0 207.2 L812.0 203.0" stroke="#d8d2c8" stroke-width="3.8" fill="none" stroke-linecap="butt" stroke-linejoin="round" /><path d="M738.3 200.4 L766.8 223.5" stroke="#d8d2c8" stroke-width="3.8" fill="none" stroke-linecap="butt" stroke-linejoin="round" /><path d="M836.5 200.0 L848.9 208.8 L843.8 223.0" stroke="#d8d2c8" stroke-width="3.8" fill="none" stroke-linecap="butt" stroke-linejoin="round" /><path d="M828.0 147.5 L836.0 138.0" stroke="#d8d2c8" stroke-width="3.8" fill="none" stroke-linecap="butt" stroke-linejoin="round" /><path d="M872.0 167.0 L885.0 169.5 L922.5 175.8" stroke="#d8d2c8" stroke-width="3.8" fill="none" stroke-linecap="butt" stroke-linejoin="round" /><path d="M923.2 167.0 L983.0 172.8 L1051.4 179.4 L1076.8 176.0" stroke="#d8d2c8" stroke-width="3.8" fill="none" stroke-linecap="butt" stroke-linejoin="round" /><path d="M923.2 167.0 L917.3 223.0" stroke="#d8d2c8" stroke-width="3.8" fill="none" stroke-linecap="butt" stroke-linejoin="round" /><path d="M893.2 148.0 L888.8 170.0 L883.7 196.3 L879.0 223.0" stroke="#d8d2c8" stroke-width="3.8" fill="none" stroke-linecap="butt" stroke-linejoin="round" /><path d="M922.5 182.0 L950.0 185.0 L983.0 188.3 L1076.8 196.0" stroke="#d8d2c8" stroke-width="3.8" fill="none" stroke-linecap="butt" stroke-linejoin="round" /><path d="M902.0 201.4 L950.0 205.9 L978.7 208.1 L1038.2 214.7 L1076.8 222.0" stroke="#d8d2c8" stroke-width="3.8" fill="none" stroke-linecap="butt" stroke-linejoin="round" /><path d="M985.0 113.0 L984.0 189.0" stroke="#d8d2c8" stroke-width="3.8" fill="none" stroke-linecap="butt" stroke-linejoin="round" /><path d="M969.3 148.0 L967.8 168.5" stroke="#d8d2c8" stroke-width="3.8" fill="none" stroke-linecap="butt" stroke-linejoin="round" /><path d="M1014.0 139.0 L1010.6 211.0" stroke="#d8d2c8" stroke-width="3.8" fill="none" stroke-linecap="butt" stroke-linejoin="round" /><path d="M1039.3 113.0 L1031.6 213.6" stroke="#d8d2c8" stroke-width="3.8" fill="none" stroke-linecap="butt" stroke-linejoin="round" /><path d="M1060.0 113.0 L1055.8 178.0" stroke="#d8d2c8" stroke-width="3.8" fill="none" stroke-linecap="butt" stroke-linejoin="round" /><path d="M1022.7 113.0 L1022.7 134.0" stroke="#d8d2c8" stroke-width="3.8" fill="none" stroke-linecap="butt" stroke-linejoin="round" /><path d="M1076.8 174.0 L1064.6 202.6 L1047.0 215.8 L1030.0 223.0" stroke="#d8d2c8" stroke-width="3.8" fill="none" stroke-linecap="butt" stroke-linejoin="round" /><path d="M986.4 124.3 L1011.7 126.5" stroke="#d8d2c8" stroke-width="3.8" fill="none" stroke-linecap="butt" stroke-linejoin="round" /><path d="M973.0 140.0 L985.0 142.5 L1014.0 139.0 L1076.8 138.0" stroke="#d8d2c8" stroke-width="3.8" fill="none" stroke-linecap="butt" stroke-linejoin="round" /><path d="M980.9 151.9 L1076.8 159.6" stroke="#d8d2c8" stroke-width="3.8" fill="none" stroke-linecap="butt" stroke-linejoin="round" /><path d="M1064.6 202.6 L1066.0 223.0" stroke="#d8d2c8" stroke-width="3.8" fill="none" stroke-linecap="butt" stroke-linejoin="round" /><path d="M865.0 214.6 L900.0 220.0" stroke="#d8d2c8" stroke-width="3.8" fill="none" stroke-linecap="butt" stroke-linejoin="round" /><path d="M873.0 182.0 L884.0 184.0" stroke="#d8d2c8" stroke-width="3.8" fill="none" stroke-linecap="butt" stroke-linejoin="round" /><path d="M730.5 150.0 L738.0 142.0" stroke="#d8d2c8" stroke-width="3.8" fill="none" stroke-linecap="butt" stroke-linejoin="round" /><path d="M777.1 112.5 L807.9 134.5 L828.0 147.5 L835.0 151.0" stroke="#ffffff" stroke-width="3.0" fill="none" stroke-linecap="butt" stroke-linejoin="round" /><path d="M843.8 148.0 L810.9 203.6 L798.0 223.0" stroke="#ffffff" stroke-width="3.0" fill="none" stroke-linecap="butt" stroke-linejoin="round" /><path d="M752.0 132.5 L774.0 148.5" stroke="#ffffff" stroke-width="3.0" fill="none" stroke-linecap="butt" stroke-linejoin="round" /><path d="M754.8 179.8 L796.5 213.0 L808.0 222.5" stroke="#ffffff" stroke-width="3.0" fill="none" stroke-linecap="butt" stroke-linejoin="round" /><path d="M792.0 223.5 L808.0 207.2 L812.0 203.0" stroke="#ffffff" stroke-width="3.0" fill="none" stroke-linecap="butt" stroke-linejoin="round" /><path d="M738.3 200.4 L766.8 223.5" stroke="#ffffff" stroke-width="3.0" fill="none" stroke-linecap="butt" stroke-linejoin="round" /><path d="M836.5 200.0 L848.9 208.8 L843.8 223.0" stroke="#ffffff" stroke-width="3.0" fill="none" stroke-linecap="butt" stroke-linejoin="round" /><path d="M828.0 147.5 L836.0 138.0" stroke="#ffffff" stroke-width="3.0" fill="none" stroke-linecap="butt" stroke-linejoin="round" /><path d="M872.0 167.0 L885.0 169.5 L922.5 175.8" stroke="#ffffff" stroke-width="3.0" fill="none" stroke-linecap="butt" stroke-linejoin="round" /><path d="M923.2 167.0 L983.0 172.8 L1051.4 179.4 L1076.8 176.0" stroke="#ffffff" stroke-width="3.0" fill="none" stroke-linecap="butt" stroke-linejoin="round" /><path d="M923.2 167.0 L917.3 223.0" stroke="#ffffff" stroke-width="3.0" fill="none" stroke-linecap="butt" stroke-linejoin="round" /><path d="M893.2 148.0 L888.8 170.0 L883.7 196.3 L879.0 223.0" stroke="#ffffff" stroke-width="3.0" fill="none" stroke-linecap="butt" stroke-linejoin="round" /><path d="M922.5 182.0 L950.0 185.0 L983.0 188.3 L1076.8 196.0" stroke="#ffffff" stroke-width="3.0" fill="none" stroke-linecap="butt" stroke-linejoin="round" /><path d="M902.0 201.4 L950.0 205.9 L978.7 208.1 L1038.2 214.7 L1076.8 222.0" stroke="#ffffff" stroke-width="3.0" fill="none" stroke-linecap="butt" stroke-linejoin="round" /><path d="M985.0 113.0 L984.0 189.0" stroke="#ffffff" stroke-width="3.0" fill="none" stroke-linecap="butt" stroke-linejoin="round" /><path d="M969.3 148.0 L967.8 168.5" stroke="#ffffff" stroke-width="3.0" fill="none" stroke-linecap="butt" stroke-linejoin="round" /><path d="M1014.0 139.0 L1010.6 211.0" stroke="#ffffff" stroke-width="3.0" fill="none" stroke-linecap="butt" stroke-linejoin="round" /><path d="M1039.3 113.0 L1031.6 213.6" stroke="#ffffff" stroke-width="3.0" fill="none" stroke-linecap="butt" stroke-linejoin="round" /><path d="M1060.0 113.0 L1055.8 178.0" stroke="#ffffff" stroke-width="3.0" fill="none" stroke-linecap="butt" stroke-linejoin="round" /><path d="M1022.7 113.0 L1022.7 134.0" stroke="#ffffff" stroke-width="3.0" fill="none" stroke-linecap="butt" stroke-linejoin="round" /><path d="M1076.8 174.0 L1064.6 202.6 L1047.0 215.8 L1030.0 223.0" stroke="#ffffff" stroke-width="3.0" fill="none" stroke-linecap="butt" stroke-linejoin="round" /><path d="M986.4 124.3 L1011.7 126.5" stroke="#ffffff" stroke-width="3.0" fill="none" stroke-linecap="butt" stroke-linejoin="round" /><path d="M973.0 140.0 L985.0 142.5 L1014.0 139.0 L1076.8 138.0" stroke="#ffffff" stroke-width="3.0" fill="none" stroke-linecap="butt" stroke-linejoin="round" /><path d="M980.9 151.9 L1076.8 159.6" stroke="#ffffff" stroke-width="3.0" fill="none" stroke-linecap="butt" stroke-linejoin="round" /><path d="M1064.6 202.6 L1066.0 223.0" stroke="#ffffff" stroke-width="3.0" fill="none" stroke-linecap="butt" stroke-linejoin="round" /><path d="M865.0 214.6 L900.0 220.0" stroke="#ffffff" stroke-width="3.0" fill="none" stroke-linecap="butt" stroke-linejoin="round" /><path d="M873.0 182.0 L884.0 184.0" stroke="#ffffff" stroke-width="3.0" fill="none" stroke-linecap="butt" stroke-linejoin="round" /><path d="M730.5 150.0 L738.0 142.0" stroke="#ffffff" stroke-width="3.0" fill="none" stroke-linecap="butt" stroke-linejoin="round" /><path d="M825.5 112.0 L807.9 137.4 L790.2 165.0 L744.0 223.5" stroke="#cfd292" stroke-width="4.7" fill="none" stroke-linecap="butt" stroke-linejoin="round" /><path d="M779.9 145.4 L807.9 164.8 L837.2 184.6 L868.0 194.9 L902.0 201.4" stroke="#cfd292" stroke-width="4.7" fill="none" stroke-linecap="butt" stroke-linejoin="round" /><path d="M812.9 170.0 L808.0 176.4 L772.5 223.5" stroke="#cfd292" stroke-width="4.7" fill="none" stroke-linecap="butt" stroke-linejoin="round" /><path d="M818.3 112.0 L838.0 126.0" stroke="#cfd292" stroke-width="4.7" fill="none" stroke-linecap="butt" stroke-linejoin="round" /><path d="M877.0 125.0 L873.8 150.2 L863.6 223.0" stroke="#cfd292" stroke-width="4.7" fill="none" stroke-linecap="butt" stroke-linejoin="round" /><path d="M920.5 125.0 L915.1 150.2 L899.8 223.0" stroke="#cfd292" stroke-width="4.7" fill="none" stroke-linecap="butt" stroke-linejoin="round" /><path d="M991.9 112.2 L1076.8 120.0" stroke="#cfd292" stroke-width="4.7" fill="none" stroke-linecap="butt" stroke-linejoin="round" /><path d="M822.0 215.5 L831.0 223.5" stroke="#cfd292" stroke-width="4.7" fill="none" stroke-linecap="butt" stroke-linejoin="round" /><path d="M825.5 112.0 L807.9 137.4 L790.2 165.0 L744.0 223.5" stroke="#f5f8c0" stroke-width="3.9" fill="none" stroke-linecap="butt" stroke-linejoin="round" /><path d="M779.9 145.4 L807.9 164.8 L837.2 184.6 L868.0 194.9 L902.0 201.4" stroke="#f5f8c0" stroke-width="3.9" fill="none" stroke-linecap="butt" stroke-linejoin="round" /><path d="M812.9 170.0 L808.0 176.4 L772.5 223.5" stroke="#f5f8c0" stroke-width="3.9" fill="none" stroke-linecap="butt" stroke-linejoin="round" /><path d="M818.3 112.0 L838.0 126.0" stroke="#f5f8c0" stroke-width="3.9" fill="none" stroke-linecap="butt" stroke-linejoin="round" /><path d="M877.0 125.0 L873.8 150.2 L863.6 223.0" stroke="#f5f8c0" stroke-width="3.9" fill="none" stroke-linecap="butt" stroke-linejoin="round" /><path d="M920.5 125.0 L915.1 150.2 L899.8 223.0" stroke="#f5f8c0" stroke-width="3.9" fill="none" stroke-linecap="butt" stroke-linejoin="round" /><path d="M991.9 112.2 L1076.8 120.0" stroke="#f5f8c0" stroke-width="3.9" fill="none" stroke-linecap="butt" stroke-linejoin="round" /><path d="M822.0 215.5 L831.0 223.5" stroke="#f5f8c0" stroke-width="3.9" fill="none" stroke-linecap="butt" stroke-linejoin="round" /><path d="M884.0 113.0 L860.6 150.2 L821.1 212.4 L814.0 224.0" stroke="#dcb27a" stroke-width="10.2" fill="none" stroke-linecap="butt" stroke-linejoin="round" /><path d="M884.0 113.0 L860.6 150.2 L821.1 212.4 L814.0 224.0" stroke="#f9d0a0" stroke-width="9.3" fill="none" stroke-linecap="butt" stroke-linejoin="round" /><path d="M884.0 113.0 L860.6 150.2 L821.1 212.4 L814.0 224.0" stroke="#b9c3b4" stroke-width="1.3" fill="none" stroke-linecap="butt" stroke-linejoin="round" /><path d="M801.3 112.0 L768.0 156.8 L730.0 209.5" stroke="#dcb27a" stroke-width="5.4" fill="none" stroke-linecap="butt" stroke-linejoin="round" /><path d="M729.5 116.5 L752.0 140.8 L768.0 158.0 L808.0 202.7 L820.5 224.0" stroke="#dcb27a" stroke-width="5.4" fill="none" stroke-linecap="butt" stroke-linejoin="round" /><path d="M923.0 112.0 L933.4 150.2 L952.7 223.5" stroke="#dcb27a" stroke-width="5.4" fill="none" stroke-linecap="butt" stroke-linejoin="round" /><path d="M944.0 112.0 L956.1 150.2 L978.3 223.5" stroke="#dcb27a" stroke-width="5.4" fill="none" stroke-linecap="butt" stroke-linejoin="round" /><path d="M801.3 112.0 L768.0 156.8 L730.0 209.5" stroke="#f9d0a0" stroke-width="4.5" fill="none" stroke-linecap="butt" stroke-linejoin="round" /><path d="M729.5 116.5 L752.0 140.8 L768.0 158.0 L808.0 202.7 L820.5 224.0" stroke="#f9d0a0" stroke-width="4.5" fill="none" stroke-linecap="butt" stroke-linejoin="round" /><path d="M923.0 112.0 L933.4 150.2 L952.7 223.5" stroke="#f9d0a0" stroke-width="4.5" fill="none" stroke-linecap="butt" stroke-linejoin="round" /><path d="M944.0 112.0 L956.1 150.2 L978.3 223.5" stroke="#f9d0a0" stroke-width="4.5" fill="none" stroke-linecap="butt" stroke-linejoin="round" /><rect x="751.2" y="142.9" width="2.6" height="2.6" rx=".5" fill="#1493dc"/><rect x="746.7" y="182.5" width="2.6" height="2.6" rx=".5" fill="#1493dc"/><rect x="773.8" y="183.1" width="2.6" height="2.6" rx=".5" fill="#1493dc"/><rect x="808.7" y="165.4" width="2.6" height="2.6" rx=".5" fill="#1493dc"/><rect x="799.7" y="192.2" width="2.6" height="2.6" rx=".5" fill="#1493dc"/><rect x="807.0" y="209.5" width="2.6" height="2.6" rx=".5" fill="#1493dc"/><rect x="827.6" y="195.3" width="2.6" height="2.6" rx=".5" fill="#1493dc"/><rect x="842.0" y="187.9" width="2.6" height="2.6" rx=".5" fill="#1493dc"/><rect x="863.1" y="150.1" width="2.6" height="2.6" rx=".5" fill="#1493dc"/><rect x="824.8" y="112.0" width="2.6" height="2.6" rx=".5" fill="#1493dc"/><rect x="733.5" y="123.0" width="2.6" height="2.6" rx=".5" fill="#1493dc"/><circle cx="794.8" cy="177.8" r="3.2" fill="#c8102e"/><path d="M793.0999999999999 177.8h3.4M794.8 176.10000000000002v3.4" stroke="#fff" stroke-width="1.1"/><circle cx="755" cy="192.4" r="3.2" fill="#c8102e"/><path d="M753.3 192.4h3.4M755 190.70000000000002v3.4" stroke="#fff" stroke-width="1.1"/><path d="M982.6999999999999 134.5h5.2l-.8 3h-3.6z" fill="#b44fc0"/><circle cx="984.0999999999999" cy="138.5" r=".6" fill="#b44fc0"/><circle cx="986.5" cy="138.5" r=".6" fill="#b44fc0"/><path d="M1042.9 120h5.2l-.8 3h-3.6z" fill="#b44fc0"/><circle cx="1044.3" cy="124" r=".6" fill="#b44fc0"/><circle cx="1046.7" cy="124" r=".6" fill="#b44fc0"/><path d="M971.6999999999999 202.4h5.2l-.8 3h-3.6z" fill="#b44fc0"/><circle cx="973.0999999999999" cy="206.4" r=".6" fill="#b44fc0"/><circle cx="975.5" cy="206.4" r=".6" fill="#b44fc0"/><text x="795.1" y="186" font-size="4.5" fill="#d0324a" text-anchor="middle" stroke="#fff" stroke-width=".7" stroke-opacity=".7" paint-order="stroke" >Unicidonto</text><text x="795.1" y="191" font-size="4.5" fill="#d0324a" text-anchor="middle" stroke="#fff" stroke-width=".7" stroke-opacity=".7" paint-order="stroke" >Campinas</text><text x="730.9" y="205.5" font-size="6.5" fill="#8d8d8d" text-anchor="start" stroke="#fff" stroke-width=".7" stroke-opacity=".7" paint-order="stroke" >dim Guanabara</text><text x="1029.2" y="185.6" font-size="7.2" fill="#a3a3a3" text-anchor="start" stroke="#fff" stroke-width=".7" stroke-opacity=".7" paint-order="stroke" >Cambuí</text><text x="806" y="140" font-size="4.3" fill="#3a3a3a" text-anchor="start" transform="rotate(-53 806 140)" stroke="#fff" stroke-width=".7" stroke-opacity=".7" paint-order="stroke" >Rua Tiradentes</text><text x="781" y="148.5" font-size="4.3" fill="#3a3a3a" text-anchor="start" transform="rotate(34 781 148.5)" stroke="#fff" stroke-width=".7" stroke-opacity=".7" paint-order="stroke" >Rua Jorge Krug</text><text x="845" y="191.5" font-size="4.3" fill="#3a3a3a" text-anchor="start" transform="rotate(11 845 191.5)" stroke="#fff" stroke-width=".7" stroke-opacity=".7" paint-order="stroke" >Rua Santos Dumont</text><text x="757" y="183" font-size="4.3" fill="#3a3a3a" text-anchor="start" transform="rotate(38 757 183)" stroke="#fff" stroke-width=".7" stroke-opacity=".7" paint-order="stroke" >Rua Prefeito Passos</text><text x="829" y="170" font-size="4.3" fill="#3a3a3a" text-anchor="start" transform="rotate(-58 829 170)" stroke="#fff" stroke-width=".7" stroke-opacity=".7" paint-order="stroke" >Rua Álvaro M</text><text x="776" y="220" font-size="4.3" fill="#3a3a3a" text-anchor="start" transform="rotate(-53 776 220)" stroke="#fff" stroke-width=".7" stroke-opacity=".7" paint-order="stroke" >Rua de Atibaia</text><text x="868" y="222" font-size="4.3" fill="#3a3a3a" text-anchor="start" transform="rotate(-82 868 222)" stroke="#fff" stroke-width=".7" stroke-opacity=".7" paint-order="stroke" >Rua Major Sólon</text><text x="905" y="222" font-size="4.3" fill="#3a3a3a" text-anchor="start" transform="rotate(-78 905 222)" stroke="#fff" stroke-width=".7" stroke-opacity=".7" paint-order="stroke" >Rua Olavo Bilac</text><text x="959" y="152" font-size="4.3" fill="#3a3a3a" text-anchor="start" transform="rotate(72 959 152)" stroke="#fff" stroke-width=".7" stroke-opacity=".7" paint-order="stroke" >Rua Maria Monteiro</text><text x="923" y="182.5" font-size="4.3" fill="#3a3a3a" text-anchor="start" transform="rotate(4 923 182.5)" stroke="#fff" stroke-width=".7" stroke-opacity=".7" paint-order="stroke" >Rua dos Bandeirantes</text><text x="946" y="207.3" font-size="4.3" fill="#3a3a3a" text-anchor="start" transform="rotate(4 946 207.3)" stroke="#fff" stroke-width=".7" stroke-opacity=".7" paint-order="stroke" >Rua Santos Dumont</text><text x="1030" y="115.6" font-size="4.3" fill="#3a3a3a" text-anchor="start" transform="rotate(5.5 1030 115.6)" stroke="#fff" stroke-width=".7" stroke-opacity=".7" paint-order="stroke" >Rua dos Alecrins</text><text x="1013" y="155.8" font-size="4.3" fill="#3a3a3a" text-anchor="start" transform="rotate(4.5 1013 155.8)" stroke="#fff" stroke-width=".7" stroke-opacity=".7" paint-order="stroke" >Rua Santo Antônio</text><text x="996" y="175.5" font-size="4.3" fill="#3a3a3a" text-anchor="start" transform="rotate(5 996 175.5)" stroke="#fff" stroke-width=".7" stroke-opacity=".7" paint-order="stroke" >Rua Doutor Sampaio Ferraz</text><text x="1014" y="192" font-size="4.3" fill="#3a3a3a" text-anchor="start" transform="rotate(4.5 1014 192)" stroke="#fff" stroke-width=".7" stroke-opacity=".7" paint-order="stroke" >Rua dos Bandeirantes</text><text x="1036" y="153" font-size="4.3" fill="#3a3a3a" text-anchor="start" transform="rotate(-86 1036 153)" stroke="#fff" stroke-width=".7" stroke-opacity=".7" paint-order="stroke" >Rua Antônio Lapa</text><text x="1010.5" y="213" font-size="4.3" fill="#3a3a3a" text-anchor="start" transform="rotate(-88 1010.5 213)" stroke="#fff" stroke-width=".7" stroke-opacity=".7" paint-order="stroke" >Emílio Ribas</text><text x="1058.5" y="178" font-size="4.3" fill="#3a3a3a" text-anchor="start" transform="rotate(-87 1058.5 178)" stroke="#fff" stroke-width=".7" stroke-opacity=".7" paint-order="stroke" >Rua Americ</text><text x="777.5" y="124.2" font-size="4.7" fill="#85855a" text-anchor="middle" stroke="#fff" stroke-width=".7" stroke-opacity=".7" paint-order="stroke" >Instituto</text><text x="777.5" y="129.4" font-size="4.7" fill="#85855a" text-anchor="middle" stroke="#fff" stroke-width=".7" stroke-opacity=".7" paint-order="stroke" >Educacional</text><text x="777.5" y="134.6" font-size="4.7" fill="#85855a" text-anchor="middle" stroke="#fff" stroke-width=".7" stroke-opacity=".7" paint-order="stroke" >Imaculada</text></svg>
<div class="b" style="left:735.80px;top:118.00px;width:13.40px;height:26.60px;background:#fff;border-radius:2px;box-shadow:0 0 0 .8px rgba(0,0,0,.12)"></div>
<div class="b" style="left:735.60px;top:131.20px;width:13.80px;height:0.50px;background:#ccc"></div>
<svg class="i" style="left:739.5px;top:121.5px;width:6px;height:6px" viewBox="0 0 6 6"><path d="M0 3h6M3 0v6" stroke="#000" stroke-width="1.05"/></svg>
<svg class="i" style="left:739.7px;top:135.2px;width:5.6px;height:6px" viewBox="0 0 6 6"><path d="M0 3h6" stroke="#222" stroke-width=".9"/></svg>
<svg class="i" style="left:898.4px;top:152.3px;width:12px;height:18.5px" viewBox="0 0 24 37"><ellipse cx="17" cy="33" rx="8" ry="2.5" fill="rgba(0,0,0,.25)" transform="rotate(-25 17 33)"/><path d="M12 1C5.500 1 1 5.800 1 12c0 7.500 8 14 11 24 3-10 11-16.500 11-24C23 5.800 18.500 1 12 1z" fill="#2a81cb" stroke="#256fb0" stroke-width="1"/><circle cx="12" cy="12" r="4.200" fill="#fff"/></svg>
<div class="b" style="left:835.20px;top:115.00px;width:138.00px;height:34.60px;background:#fff;border-radius:5.5px;box-shadow:0 1px 5px rgba(0,0,0,.4)"></div>
<div class="b" style="left:900.4px;top:145.7px;width:7.6px;height:7.6px;background:#fff;transform:rotate(45deg);box-shadow:1px 1px 3px rgba(0,0,0,.25)"></div>
<div class="b" style="left:895.00px;top:143.00px;width:18.00px;height:6.60px;background:#fff"></div>
<span class="t" style="left:844px;top:115.00px;font-size:5.75px;line-height:20px;color:#333;transform:translateX(0.70px) scaleX(1.0011);font-weight:bold;">00961248000119</span>
<span class="t" style="left:844px;top:122.00px;font-size:5.75px;line-height:20px;color:#333;transform:translateX(0.70px) scaleX(0.9950);">CONDOMINIO EDIFICIO ILHA DE MAJORCA</span>
<span class="t" style="left:844px;top:129.00px;font-size:5.75px;line-height:20px;color:#333;transform:translateX(0.70px) scaleX(0.9986);font-style:italic;">RUA BARAO DE ATALIBA 155</span>
<span class="t" style="left:965px;top:111.00px;font-size:9.5px;line-height:20px;color:#757575;transform:translateX(0.80px) scaleX(0.7931);">×</span>
<div class="b" style="left:974.20px;top:215.80px;width:102.80px;height:7.20px;background:rgba(255,255,255,.8)"></div>
<svg class="i" style="left:975.4px;top:217.6px;width:5.5px;height:3.7px" viewBox="0 0 12 8"><rect width="12" height="4" fill="#4c7be1"/><rect y="4" width="12" height="4" fill="#ffd500"/></svg>
<span class="t" style="left:982px;top:208.00px;font-size:5.3px;line-height:20px;color:#0078a8;transform:translateX(0.20px) scaleX(0.9930);">Leaflet</span>
<span class="t" style="left:1000px;top:208.00px;font-size:5.3px;line-height:20px;color:#555;transform:translateX(0.30px) scaleX(0.6531);">|</span>
<span class="t" style="left:1003px;top:208.00px;font-size:5.3px;line-height:20px;color:#333;transform:translateX(0.00px) scaleX(0.9216);">©</span>
<span class="t" style="left:1007px;top:208.00px;font-size:5.3px;line-height:20px;color:#0078a8;transform:translateX(0.80px) scaleX(0.9995);">OpenStreetMap</span>
<span class="t" style="left:1046px;top:208.00px;font-size:5.3px;line-height:20px;color:#333;transform:translateX(0.60px) scaleX(0.9858);">contributors</span>
<div class="b" style="left:730.50px;top:223.00px;width:346.50px;height:18.00px;background:#f7f7f7;border-radius:0 0 3px 3px;border-top:1px solid #e4e4e4"></div>
<span class="t" style="left:738px;top:223.00px;font-size:7.2px;line-height:20px;color:#333;transform:translateX(0.00px) scaleX(0.8202);font-weight:bold;">Coordenadas:</span>
<span class="t" style="left:779px;top:223.00px;font-size:7.2px;line-height:20px;color:#444;transform:translateX(0.50px) scaleX(0.8287);">-22,891630, -47,056399</span>
<div class="card" style="left:730.5px;top:253px;width:346.5px;height:111.3px"></div>
<div class="ch" style="left:730.5px;top:253px;width:346.5px;height:18px;border-bottom:1px solid #7a7a7a;box-shadow:0 1px 0 rgba(90,90,90,.3)"></div>
<svg class="i" style="left:737.60px;top:257.25px;width:9.54px;height:9.54px" viewBox="0 0 16 16" fill="#333"><path d="M1 0 0 1l2.200 3.081a1 1 0 0 0 .815.419h.07a1 1 0 0 1 .708.293l2.675 2.675-2.617 2.654A3.003 3.003 0 0 0 0 13a3 3 0 1 0 5.878-.851l2.654-2.617.968.968-.305.914a1 1 0 0 0 .242 1.023l3.270 3.270a.997.997 0 0 0 1.414 0l1.586-1.586a.997.997 0 0 0 0-1.414l-3.270-3.270a1 1 0 0 0-1.023-.242L10.500 9.500l-.960-.960 2.680-2.643A3.005 3.005 0 0 0 16 3q0-.405-.102-.777l-2.140 2.141L12 4l-.364-1.757L13.777.102a3 3 0 0 0-3.675 3.680L7.462 6.460 4.793 3.793a1 1 0 0 1-.293-.707v-.071a1 1 0 0 0-.419-.814zm9.646 10.646a.5.5 0 0 1 .708 0l2.914 2.915a.5.5 0 0 1-.707.707l-2.915-2.914a.5.5 0 0 1 0-.708M3 11l.471.242.529.026.287.445.445.287.026.529L5 13l-.242.471-.026.529-.445.287-.287.445-.529.026L3 15l-.471-.242L2 14.732l-.287-.445L1.268 14l-.026-.529L1 13l.242-.471.026-.529.445-.287.287-.445.529-.026z"/></svg>
<span class="t" style="left:749px;top:252.00px;font-size:9.5px;line-height:20px;color:#3a3a3a;transform:translateX(0.50px) scaleX(0.8901);-webkit-text-stroke:0.35px #3a3a3a;">Ações</span>
<div class="b" style="left:738.00px;top:278.30px;width:331.70px;height:16.70px;background:#ffc107;border-radius:2.5px"></div>
<svg class="i" style="left:882.70px;top:283.46px;width:7.25px;height:7.25px" viewBox="0 0 16 16" fill="#222" stroke="#222" stroke-width="0.2"><path d="M12.146.146a.5.5 0 0 1 .708 0l3 3a.5.5 0 0 1 0 .708l-10 10a.5.5 0 0 1-.168.11l-5 2a.5.5 0 0 1-.65-.65l2-5a.5.5 0 0 1 .11-.168zM11.207 2.5 13.500 4.793 14.793 3.500 12.500 1.207zm1.586 3L10.500 3.207 4 9.707V10h.5a.5.5 0 0 1 .5.5v.5h.5a.5.5 0 0 1 .5.5v.5h.293zm-9.761 5.175-.106.106-1.528 3.821 3.821-1.528.106-.106A.5.5 0 0 1 5 12.500V12h-.5a.5.5 0 0 1-.5-.5V11h-.5a.5.5 0 0 1-.468-.325"/></svg>
<span class="t" style="left:892px;top:278.00px;font-size:7.5px;line-height:20px;color:#111;transform:translateX(0.00px) scaleX(0.9344);">Editar Alvo</span>
<div class="b" style="left:738.00px;top:299.00px;width:331.70px;height:16.60px;background:#0dcaf0;border-radius:2.5px"></div>
<svg class="i" style="left:872.00px;top:304.26px;width:7.25px;height:7.25px" viewBox="0 0 16 16" fill="#222" stroke="#222" stroke-width="0.2"><path d="M15 14s1 0 1-1-1-4-5-4-5 3-5 4 1 1 1 1zm-7.978-1L7 12.996c.001-.264.167-1.03.76-1.72C8.312 10.629 9.282 10 11 10c1.717 0 2.687.63 3.24 1.276.593.69.758 1.457.76 1.720l-.8.002-.14.002zM11 7a2 2 0 1 0 0-4 2 2 0 0 0 0 4m3-2a3 3 0 1 1-6 0 3 3 0 0 1 6 0M6.936 9.280a6 6 0 0 0-1.230-.247A7 7 0 0 0 5 9c-4 0-5 3-5 4q0 1 1 1h4.216A2.240 2.240 0 0 1 5 13c0-1.010.377-2.042 1.090-2.904.243-.294.526-.569.846-.816M4.920 10A5.500 5.500 0 0 0 4 13H1c0-.260.164-1.030.760-1.724.545-.636 1.492-1.256 3.160-1.275ZM1.500 5.500a3 3 0 1 1 6 0 3 3 0 0 1-6 0m3-2a2 2 0 1 0 0 4 2 2 0 0 0 0-4"/></svg>
<span class="t" style="left:881px;top:298.00px;font-size:7.5px;line-height:20px;color:#111;transform:translateX(0.20px) scaleX(0.8933);">Associar à Equipe</span>
<div class="b" style="left:738.00px;top:319.60px;width:331.70px;height:16.90px;border:1px solid #e46672;border-radius:2.5px;background:#fff"></div>
<svg class="i" style="left:853.33px;top:324.79px;width:7.10px;height:7.10px" viewBox="0 0 16 16" fill="#dc3545" stroke="#dc3545" stroke-width="0.2"><path d="M5.5 5.5A.5.5 0 0 1 6 6v6a.5.5 0 0 1-1 0V6a.5.5 0 0 1 .5-.5m2.500 0a.5.5 0 0 1 .5.5v6a.5.5 0 0 1-1 0V6a.5.5 0 0 1 .5-.5m3 .5a.5.5 0 0 0-1 0v6a.5.5 0 0 0 1 0z"/><path d="M14.500 3a1 1 0 0 1-1 1H13v9a2 2 0 0 1-2 2H5a2 2 0 0 1-2-2V4h-.5a1 1 0 0 1-1-1V2a1 1 0 0 1 1-1H6a1 1 0 0 1 1-1h2a1 1 0 0 1 1 1h3.500a1 1 0 0 1 1 1zM4.118 4 4 4.059V13a1 1 0 0 0 1 1h6a1 1 0 0 0 1-1V4.059L11.882 4zM2.500 3h11V2h-11z"/></svg>
<span class="t" style="left:862px;top:319.00px;font-size:7.5px;line-height:20px;color:#dc3545;transform:translateX(0.20px) scaleX(0.9188);">Excluir Formulário Preenchido</span>
<div class="b" style="left:738.00px;top:340.20px;width:331.70px;height:16.80px;border:1px solid #868d94;border-radius:2.5px;background:#fff"></div>
<svg class="i" style="left:879.25px;top:345.46px;width:7.25px;height:7.25px" viewBox="0 0 16 16" fill="#6c757d" stroke="#6c757d" stroke-width="0.2"><path fill-rule="evenodd" d="M15 8a.5.5 0 0 0-.5-.5H2.707l3.147-3.146a.5.5 0 1 0-.708-.708l-4 4a.5.5 0 0 0 0 .708l4 4a.5.5 0 0 0 .708-.708L2.707 8.500H14.500A.5.5 0 0 0 15 8"/></svg>
<span class="t" style="left:888px;top:340.00px;font-size:7.5px;line-height:20px;color:#6c757d;transform:translateX(0.50px) scaleX(0.9109);">Voltar à Lista</span>
</body></html>
